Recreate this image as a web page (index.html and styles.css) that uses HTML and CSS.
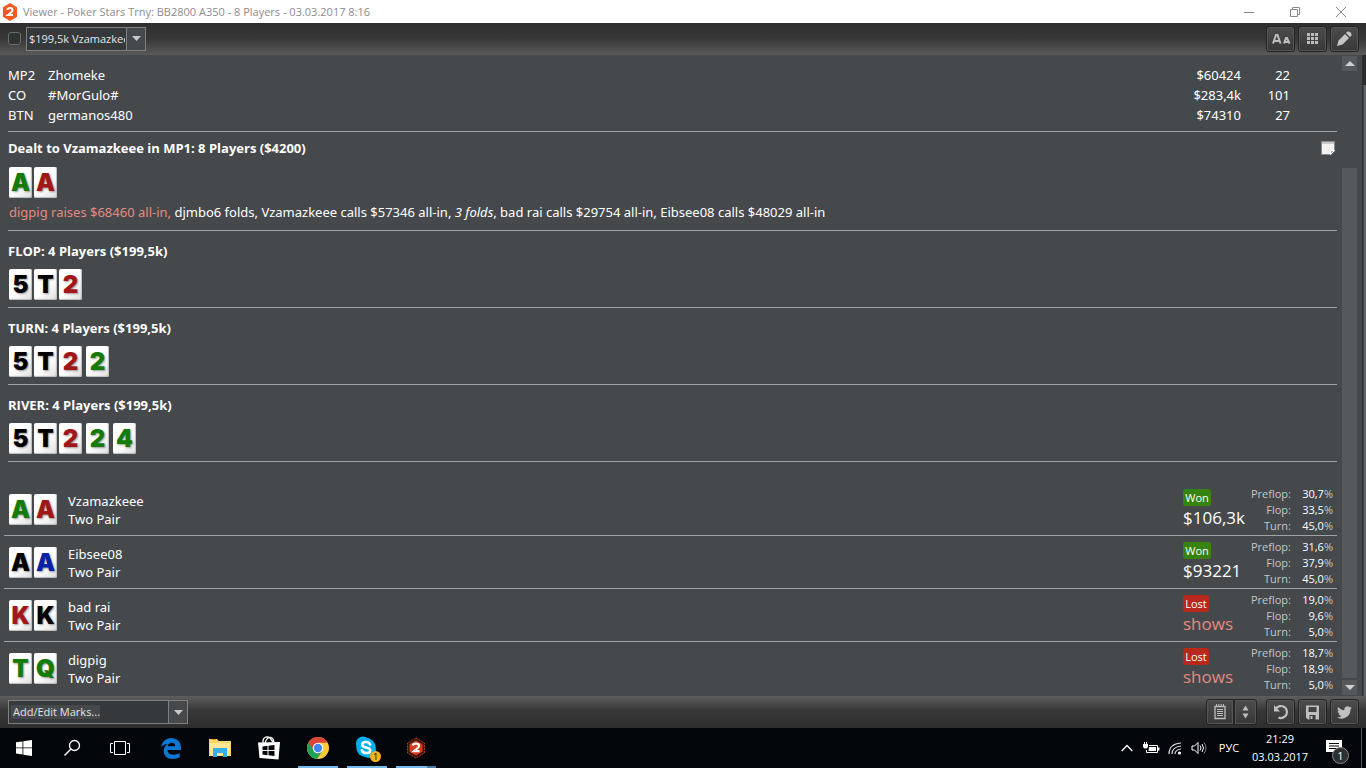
FILE: index.html
```html
<!DOCTYPE html>
<html lang="en">
<head>
<meta charset="utf-8">
<title>Viewer - Poker Stars Trny</title>
<link rel="stylesheet" href="styles.css">
</head>
<body>
<header class="titlebar">
  <svg class="app-icon" width="16" height="18" viewBox="0 0 16 18" aria-hidden="true"><path d="M8 1l6.300 3.600v8.800L8 17l-6.300-3.600V4.600z" fill="#f15a22" stroke="#f15a22" stroke-width="1.600" stroke-linejoin="round"/><path d="M5.300 6.800Q5.700 5 8 5q2.500 0 2.500 2 0 1.300-1.800 2.700L6 12h5" fill="none" stroke="#fff" stroke-width="2"/></svg>
  <h1 class="title">Viewer - Poker Stars Trny: BB2800 A350 - 8 Players - 03.03.2017 8:16</h1>
  <div class="window-controls">
    <button aria-label="Minimize"><svg width="12" height="12" viewBox="0 0 12 12"><path d="M1 6.500h10" stroke="#888"/></svg></button>
    <button aria-label="Restore"><svg width="12" height="12" viewBox="0 0 12 12"><path d="M1.500 3.500h7v7h-7zM3.500 3.500v-2h7v7h-2" fill="none" stroke="#888"/></svg></button>
    <button aria-label="Close"><svg width="12" height="12" viewBox="0 0 12 12"><path d="M1 1l10 10M11 1L1 11" stroke="#888"/></svg></button>
  </div>
</header>

<div class="toolbar toolbar-top">
  <input class="check" type="checkbox" aria-label="Select hand">
  <div class="combo combo-hand">
    <select aria-label="Hand"><option>$199,5k Vzamazkeee</option></select>
    <span class="combo-arrow"><svg width="9" height="5" viewBox="0 0 9 5"><path d="M0 0h9L4.500 5z" fill="#c8c8c8"/></svg></span>
  </div>
  <div class="tools">
    <button class="tool" aria-label="Text size"><svg width="20" height="12" viewBox="0 0 20 12"><path d="M2 10.500L5 2h1.500L9.500 10.500M3.500 8h5M13 10.500L15 5h1l2.500 5.500M14 9h4" fill="none" stroke="#bdbdbd" stroke-width="2"/></svg></button>
    <button class="tool" aria-label="Grid"><svg width="13" height="13" viewBox="0 0 13 13"><path d="M1 1h3v3H1zM5 1h3v3H5zM9 1h3v3H9zM1 5h3v3H1zM5 5h3v3H5zM9 5h3v3H9zM1 9h3v3H1zM5 9h3v3H5zM9 9h3v3H9z" fill="#bdbdbd"/></svg></button>
    <button class="tool" aria-label="Edit"><svg width="15" height="15" viewBox="0 0 15 15"><path d="M0 15l1.500-5.500L8 3l4 4-6.500 6.500zM9 2l1.500-1.500Q12 0 13.500 1.500T14.500 4.500L13 6z" fill="#c4c4c4"/></svg></button>
  </div>
</div>

<main class="viewer">
  <div class="hand">
    <table class="players">
      <tr><td class="pos">MP2</td><td>Zhomeke</td><td class="num">$60424</td><td class="num bb">22</td></tr>
      <tr><td class="pos">CO</td><td>#MorGulo#</td><td class="num">$283,4k</td><td class="num bb">101</td></tr>
      <tr><td class="pos">BTN</td><td>germanos480</td><td class="num">$74310</td><td class="num bb">27</td></tr>
    </table>

    <section class="street preflop">
      <div class="street-head">
        <h2>Dealt to Vzamazkeee in MP1: 8 Players ($4200)</h2>
        <button class="note" aria-label="Note"><svg width="16" height="16" viewBox="0 0 16 16"><path d="M1.500 1.500h13V11l-3.500 3.500H1.500z" fill="#f2f2f2" stroke="#8a8a8a"/><path d="M2 2h12v2H2z" fill="#c9c9c9"/><path d="M10.500 14.500v-4h4z" fill="#b0b0b0" stroke="#fff"/></svg></button>
      </div>
      <div class="cards"><span class="card club">A</span><span class="card heart">A</span></div>
      <p class="action"><span class="raise">digpig raises $68460 all-in,</span> djmbo6 folds, Vzamazkeee calls $57346 all-in, <em>3 folds</em>, bad rai calls $29754 all-in, Eibsee08 calls $48029 all-in</p>
    </section>

    <section class="street">
      <h2>FLOP: 4 Players ($199,5k)</h2>
      <div class="cards"><span class="card">5</span><span class="card">T</span><span class="card heart">2</span></div>
    </section>
    <section class="street">
      <h2>TURN: 4 Players ($199,5k)</h2>
      <div class="cards"><span class="card">5</span><span class="card">T</span><span class="card heart">2</span><span class="card club later">2</span></div>
    </section>
    <section class="street">
      <h2>RIVER: 4 Players ($199,5k)</h2>
      <div class="cards"><span class="card">5</span><span class="card">T</span><span class="card heart">2</span><span class="card club later">2</span><span class="card club later">4</span></div>
    </section>

    <div class="results">
      <article class="result">
        <div class="cards"><span class="card club">A</span><span class="card heart">A</span></div>
        <div class="who"><div>Vzamazkeee</div><div>Two Pair</div></div>
        <div class="outcome"><span class="badge won">Won</span><div class="amount">$106,3k</div></div>
        <dl class="odds"><dt>Preflop:</dt><dd>30,7<i>%</i></dd><dt>Flop:</dt><dd>33,5<i>%</i></dd><dt>Turn:</dt><dd>45,0<i>%</i></dd></dl>
      </article>
      <article class="result">
        <div class="cards"><span class="card">A</span><span class="card diamond">A</span></div>
        <div class="who"><div>Eibsee08</div><div>Two Pair</div></div>
        <div class="outcome"><span class="badge won">Won</span><div class="amount">$93221</div></div>
        <dl class="odds"><dt>Preflop:</dt><dd>31,6<i>%</i></dd><dt>Flop:</dt><dd>37,9<i>%</i></dd><dt>Turn:</dt><dd>45,0<i>%</i></dd></dl>
      </article>
      <article class="result">
        <div class="cards"><span class="card heart">K</span><span class="card">K</span></div>
        <div class="who"><div>bad rai</div><div>Two Pair</div></div>
        <div class="outcome"><span class="badge lost">Lost</span><div class="amount shows">shows</div></div>
        <dl class="odds"><dt>Preflop:</dt><dd>19,0<i>%</i></dd><dt>Flop:</dt><dd>9,6<i>%</i></dd><dt>Turn:</dt><dd>5,0<i>%</i></dd></dl>
      </article>
      <article class="result">
        <div class="cards"><span class="card club">T</span><span class="card club">Q</span></div>
        <div class="who"><div>digpig</div><div>Two Pair</div></div>
        <div class="outcome"><span class="badge lost">Lost</span><div class="amount shows">shows</div></div>
        <dl class="odds"><dt>Preflop:</dt><dd>18,7<i>%</i></dd><dt>Flop:</dt><dd>18,9<i>%</i></dd><dt>Turn:</dt><dd>5,0<i>%</i></dd></dl>
      </article>
    </div>
  </div>
  <div class="scrollbar">
    <button aria-label="Scroll up"><svg width="10" height="5" viewBox="0 0 10 5"><path d="M0 5h10L5 0z" fill="#d0d0d0"/></svg></button>
    <div class="track"><div class="thumb"></div></div>
    <button aria-label="Scroll down"><svg width="10" height="5" viewBox="0 0 10 5"><path d="M0 0h10L5 5z" fill="#d0d0d0"/></svg></button>
  </div>
  <div class="edge"></div>
</main>

<div class="toolbar toolbar-bottom">
  <div class="combo combo-marks">
    <select aria-label="Marks"><option>Add/Edit Marks...</option></select>
    <span class="combo-arrow"><svg width="9" height="5" viewBox="0 0 9 5"><path d="M0 0h9L4.500 5z" fill="#c8c8c8"/></svg></span>
  </div>
  <div class="tools">
    <div class="split">
      <button class="tool" aria-label="Notes"><svg width="12" height="16" viewBox="0 0 12 16"><path d="M1 2.500h10v12H1z" fill="none" stroke="#bdbdbd" stroke-width="1.300"/><path d="M2.500 0v3M4.800 0v3M7.200 0v3M9.500 0v3M3 5.500h6M3 7.500h6M3 9.500h6M3 11.500h6" stroke="#bdbdbd"/></svg></button>
      <button class="tool narrow" aria-label="Notes options"><svg width="7" height="14" viewBox="0 0 7 14"><path d="M0.500 5.500h6L3.500 0.500zM0.500 8.500h6l-3 5z" fill="#bdbdbd"/></svg></button>
    </div>
    <button class="tool" aria-label="Replay"><svg width="16" height="16" viewBox="0 0 16 16"><path d="M2.500 5.500A6 6 0 1 1 5.500 13.500" fill="none" stroke="#c0c0c0" stroke-width="2.200"/><path d="M1 1v6.500h6z" fill="#c0c0c0"/></svg></button>
    <button class="tool" aria-label="Save"><svg width="15" height="15" viewBox="0 0 15 15"><path d="M1 0.500h13v14H3l-2-2zM3.500 2v5h8V2zM4.500 10v4.500h6V10z" fill="#c0c0c0" fill-rule="evenodd"/><path d="M5.500 11h2v3h-2z" fill="#c0c0c0"/></svg></button>
    <button class="tool" aria-label="Tweet"><svg width="15" height="13" viewBox="0 2 24 20"><path d="M24 4.600c-.9.400-1.800.7-2.800.8 1-.6 1.800-1.600 2.200-2.700-1 .6-2 1-3.100 1.200a4.900 4.900 0 0 0-8.400 4.500C7.800 8.200 4.200 6.300 1.700 3.200.4 5.400 1 8.300 3.200 9.700c-.8 0-1.600-.2-2.200-.6 0 2.300 1.600 4.400 3.900 4.900-.7.200-1.500.2-2.200.1.600 2 2.400 3.400 4.600 3.400A9.900 9.900 0 0 1 0 19.500 14 14 0 0 0 21.500 7c1-.7 1.800-1.500 2.500-2.400z" fill="#c0c0c0"/></svg></button>
  </div>
</div>

<nav class="taskbar" aria-label="Taskbar">
  <div class="launch system">
    <button aria-label="Start"><svg width="16" height="16" viewBox="0 0 16 16"><path d="M0 2.300L6.500 1.400V7.500H0zM7.300 1.300L16 0v7.500H7.300zM0 8.300h6.500v6.200L0 13.600zM7.300 8.300H16V16l-8.700-1.300z" fill="#fff"/></svg></button>
    <button aria-label="Search"><svg width="18" height="18" viewBox="0 0 18 18"><circle cx="11.500" cy="6.500" r="5" fill="none" stroke="#fff" stroke-width="1.300"/><path d="M8 10l-6.500 6.500" stroke="#fff" stroke-width="1.500"/></svg></button>
    <button aria-label="Task view"><svg width="20" height="16" viewBox="0 0 20 16"><path d="M4.500 1.500h11v13h-11zM3 3.500H.5v9H3M17 3.500h2.500v9H17" fill="none" stroke="#fff"/></svg></button>
  </div>
  <div class="launch">
    <button aria-label="Edge"><svg width="22" height="22" viewBox="0 0 22 22"><path d="M1 10C2 4.500 6 1 11 1c6 0 10 4 10 9.500V13H7.500c0 3 2.500 4.700 6 4.700 2.500 0 4.500-.7 6.200-1.700v4.300Q17 22 12.700 22C7 22 3.700 18.500 3.700 14c0-3 1.300-5.500 4-7C4.500 7.200 2.300 8.500 1 10zm6.700-.7h7.600c0-2.300-1.300-3.600-3.500-3.600S8 7 7.700 9.300z" fill="#0b78d4"/></svg></button>
    <button aria-label="File Explorer"><svg width="22" height="20" viewBox="0 0 22 20"><path d="M0 1h8l1.500 2H22v15H0z" fill="#f8d568"/><path d="M1 5h20v13H1z" fill="#ffe694"/><path d="M4 19v-9h14v9h-4v-4H8v4z" fill="#38aee8"/><path d="M2 1.500h5" stroke="#e9a91d"/></svg></button>
    <button aria-label="Store"><svg width="22" height="24" viewBox="0 0 22 24"><path d="M0 6.500l22-.5-1.500 17.500L1.500 22z" fill="#fff"/><path d="M5 8V5q0-3 3-4 2-.5 4 1l3 4M7 7Q9 1 13 1.500q3 1 3 6" fill="none" stroke="#fff" stroke-width="1.300"/><path d="M4.500 10.500l5-.7v4.200h-5zM10.500 9.700l6-.8V14h-6zM4.500 15h5v4.200l-5-.7zM10.500 15h6v5l-6-.8z" fill="#05070a"/></svg></button>
    <button class="open" aria-label="Chrome"><svg width="22" height="22" viewBox="0 0 22 22"><circle cx="11" cy="11" r="11" fill="#fbcb3c"/><path d="M11 11L1.500 5.500A11 11 0 0 0 10 22l5.500-8z" fill="#22a05a"/><path d="M1.500 5.500A11 11 0 0 1 20.600 5.700H11L6.500 13z" fill="#dc4437"/><circle cx="11" cy="11" r="5.300" fill="#fff"/><circle cx="11" cy="11" r="4.200" fill="#4285f4"/></svg></button>
    <button class="open" aria-label="Skype"><svg width="24" height="24" viewBox="0 0 24 24"><circle cx="8" cy="7.500" r="7" fill="#00aff0"/><circle cx="14" cy="15" r="7" fill="#00aff0"/><circle cx="11" cy="11.500" r="9.700" fill="#00aff0"/><path d="M15 8.500Q14.500 6 11.200 6 7.200 6 7.200 8.700q0 2 4 2.800t4 2.900q0 2.600-4 2.600-3.600 0-4.300-2.700" fill="none" stroke="#fff" stroke-width="2.600" stroke-linecap="round"/></svg><span class="count">1</span></button>
    <button class="open multi" aria-label="Hand viewer"><svg width="20" height="22" viewBox="0 0 20 22"><path d="M10 1l8.500 5v10L10 21l-8.500-5V6z" fill="#3a120c" stroke="#b83a20" stroke-dasharray="2 1"/><path d="M10 3.500l6.500 3.700v7.600L10 18.500l-6.500-3.700V7.200z" fill="#d93a1e"/><path d="M6.700 8.500Q7 6.700 10 6.700q3 0 3 2.200 0 1.300-2 2.800l-3 2.500h5.500" fill="none" stroke="#fff" stroke-width="2.200"/></svg></button>
  </div>
  <div class="tray">
    <button aria-label="Hidden icons"><svg width="12" height="8" viewBox="0 0 12 8"><path d="M.7 7L6 1.500 11.300 7" fill="none" stroke="#fff" stroke-width="1.300"/></svg></button>
    <button aria-label="Battery"><svg width="18" height="14" viewBox="0 0 18 14"><path d="M7 4.500h8.500v7H4.500V9" fill="none" stroke="#fff"/><path d="M7 6h7v4H6.500zM16 6.500h1.500v3H16zM1 3h5v3L4.500 7.500h-2L1 6zM2 1h1v2H2zM4 1h1v2H4z" fill="#fff"/></svg></button>
    <button aria-label="Network"><svg width="14" height="14" viewBox="0 0 14 14"><g fill="none" stroke="#ddd" stroke-width="1.200"><path d="M1 13Q1 3 13 2"/><path d="M4 13q0-7 9-8" /><path d="M7 13q0-4 6-5"/></g><circle cx="11.500" cy="12" r="1.600" fill="#fff"/></svg></button>
    <button aria-label="Volume"><svg width="16" height="14" viewBox="0 0 16 14"><path d="M1 5h2.500L7 1.500v11L3.500 9H1z" fill="none" stroke="#fff"/><path d="M9 4.500q2 2.500 0 5M11 3q3 4 0 8" fill="none" stroke="#fff"/><path d="M13 1.500q4 5.500 0 11" fill="none" stroke="#888"/></svg></button>
    <button class="lang">РУС</button>
    <button class="clock"><span>21:29</span><span>03.03.2017</span></button>
    <button class="center" aria-label="Notifications"><svg width="16" height="16" viewBox="0 0 16 16"><path d="M0 0h16v12h-5v4l-4-4H0z" fill="#fff"/><path d="M3 3.500h10M3 6h10M3 8.500h7" stroke="#05070a"/></svg><span class="count">1</span></button>
  </div>
</nav>
</body>
</html>
```
FILE: styles.css
```css
* { box-sizing: border-box; }
body {
  margin: 0;
  height: 100vh;
  display: flex;
  flex-direction: column;
  font: 13px/20px "Noto Sans", "Open Sans", sans-serif;
  color: #fff;
  background: #45494b;
}
button {
  display: flex;
  align-items: center;
  justify-content: center;
  padding: 0;
  border: 0;
  background: none;
  color: inherit;
  font: inherit;
}
h1, h2, p, dl, dd { margin: 0; }
svg { display: block; flex: none; }

.titlebar {
  flex: none;
  display: flex;
  align-items: center;
  height: 23px;
  padding: 0 2px;
  gap: 5px;
  background: #fff;
}
.title { flex: 1; font: 400 11px/20px "Open Sans", "Noto Sans", sans-serif; color: #8c8c8c; }
.window-controls { display: flex; height: 20px; }
.window-controls button { width: 46px; }

.toolbar {
  flex: none;
  display: flex;
  align-items: center;
  height: 32px;
  padding: 0 7px 0 8px;
}
.toolbar-top { padding-bottom: 1px; background: linear-gradient(#2e2e2e, #383838 50%, #5a5a5a); }
.toolbar-bottom { background: linear-gradient(#5e5e5e, #383838 45%, #2e2e2e); }
.check {
  appearance: none;
  width: 13px;
  height: 13px;
  margin: 0 5px 0 0;
  border: 1px solid #6a6a6a;
  border-radius: 3px;
  background: #2f3233;
}
.combo {
  display: grid;
  height: 24px;
  border: 1px solid #808080;
  background: #36393b;
}
.combo-hand { width: 120px; }
.combo-marks { width: 180px; }
.combo select, .combo-arrow { grid-area: 1 / 1; }
.combo select {
  appearance: none;
  min-width: 0;
  width: 100%;
  padding: 0 20px 0 2px;
  border: 0;
  background: none;
  color: #e4e4e4;
  font: 11px/20px "Open Sans", "Noto Sans", sans-serif;
}
.combo-marks select {
  padding-left: 4px;
  background: linear-gradient(#45494b, #45494b) 2px center / 89px 14px no-repeat;
}
.combo-arrow {
  justify-self: end;
  display: flex;
  align-items: center;
  justify-content: center;
  width: 19px;
  border-left: 1px solid #808080;
  background: #45494b;
  pointer-events: none;
}
.tools { display: flex; gap: 3px; margin-left: auto; }
.tool {
  width: 29px;
  height: 26px;
  border: 1px solid #242424;
  border-radius: 3px;
  background: linear-gradient(#4c4c4c, #383838);
  box-shadow: inset 0 0 0 1px #555;
}
.split { display: flex; margin-right: 6px; }
.split .tool { width: 28px; border-radius: 3px 0 0 3px; }
.split .narrow { width: 23px; border-radius: 0 3px 3px 0; }

.viewer { flex: 1; display: flex; min-height: 0; overflow: hidden; }
.hand { flex: 1; padding: 0 5px 0 4px; }
.players {
  width: calc(100% - 4px);
  margin-left: 4px;
  padding: 10px 0 6px;
  border-spacing: 0;
  border-bottom: 1px solid #a0a3a4;
}
.players td { height: 20px; padding: 0; }
.players .pos { width: 40px; }
.players .num { width: 60px; text-align: right; }
.players .bb { width: 96px; padding-right: 47px; }

.street {
  margin-left: 4px;
  padding: 10px 0 7px;
  border-bottom: 1px solid #a0a3a4;
}
.preflop { padding-top: 6px; }
h2 { font: 700 13px/20px "Open Sans", "Noto Sans", sans-serif; }
.street-head { display: flex; justify-content: space-between; padding-bottom: 1px; }
.note { width: 18px; height: 20px; }
.cards { display: flex; gap: 2px; padding: 8px 0 0 1px; }
.card {
  width: 23px;
  height: 31px;
  border-radius: 2px;
  background: linear-gradient(135deg, #fff 55%, #ddd);
  box-shadow: inset -1px -1px 1px #bbb;
  color: #000;
  font: 900 24px/32px Inter, "Liberation Sans", sans-serif;
  text-align: center;
  text-shadow: 1px 1px 2px #999;
}
.later { margin-left: 2px; }
.club { color: #147a08; }
.heart { color: #a01818; }
.diamond { color: #0522a8; }
.action { padding: 4px 0 1px 1px; }
.raise { color: #e58a80; }

.results { padding-top: 21px; }
.result {
  display: grid;
  grid-template-columns: 64px 1fr 64px 90px;
  padding: 3px 0 1px;
  border-bottom: 1px solid #a0a3a4;
}
.result:last-child { border-bottom: 0; }
.result .cards { padding: 8px 0 0 5px; }
.who { padding-top: 6px; line-height: 18px; }
.outcome, .odds { font-family: "Open Sans", "Noto Sans", sans-serif; }
.badge {
  display: block;
  width: 28px;
  margin-top: 3px;
  border-radius: 3px;
  font-size: 11px;
  line-height: 17px;
  text-align: center;
}
.won { background: #37830f; }
.lost { width: 26px; background: #b8281c; }
.amount { font-size: 17px; line-height: 24px; }
.shows { color: #e58a80; }
.odds {
  display: grid;
  grid-template-columns: 48px 38px;
  gap: 0 4px;
  padding-right: 4px;
  justify-content: end;
  font-size: 11px;
  line-height: 16px;
  text-align: right;
}
.odds dt, .odds i { color: #c4c6c7; font-style: normal; }

.scrollbar { display: flex; flex-direction: column; width: 15px; padding: 1px 0; }
.scrollbar button { width: 15px; height: 15px; background: #55595b; }
.track { flex: 1; display: flex; flex-direction: column; justify-content: end; padding-bottom: 2px; }
.thumb { height: 84%; background: #55595b; }
.edge { width: 4px; margin: 0 0 0 5px; border-left: 1px solid #2c2e2f; border-right: 2px solid #606466; }
.edge::before { content: ""; display: block; width: 4px; height: 30px; background: #2a2c2d; }

.taskbar {
  flex: none;
  display: flex;
  height: 40px;
  background: #020509;
  font-family: "Open Sans", "Noto Sans", sans-serif;
}
.launch { display: flex; }
.launch button { position: relative; width: 49px; }
.system { margin-right: 2px; }
.system button { width: 48px; }
.open::after {
  content: "";
  position: absolute;
  bottom: 0;
  left: 5px;
  width: 40px;
  height: 2px;
  background: #76b9ed;
}
.multi::after { background: linear-gradient(90deg, #76b9ed 31px, #4b7ba2 31px); }
.count {
  position: absolute;
  right: 10px;
  bottom: 6px;
  width: 11px;
  height: 11px;
  border-radius: 50%;
  background: #fbb117;
  color: #000;
  font-size: 9px;
  line-height: 11px;
}
.tray { display: flex; margin-left: auto; padding-right: 4px; font-size: 12px; }
.tray button { width: 24px; }
.tray .lang { width: 36px; font-size: 11px; }
.tray .clock { flex-direction: column; width: 66px; font-size: 11px; line-height: 18px; }
.tray .center { position: relative; width: 49px; padding-right: 7px; border-right: 1px solid #55585c; }
.center .count {
  right: 12px;
  bottom: 4px;
  width: 17px;
  height: 17px;
  border: 1px solid #8a8a8a;
  background: #2d2f31;
  color: #fff;
  font-size: 11px;
  line-height: 15px;
}
```
